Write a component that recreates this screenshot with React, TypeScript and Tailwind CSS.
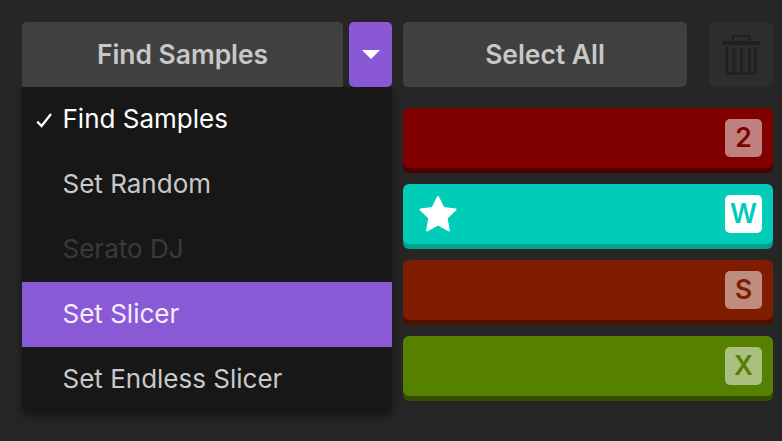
import React from "react";

function MenuItem({ label, kind }: { label: string; kind?: "checked" | "disabled" | "active" }) {
  const color =
    kind === "checked" ? "text-white" : kind === "disabled" ? "text-[#3a3a3a]" : kind === "active" ? "bg-[#8a5ad6] text-[#f4ecff]" : "text-[#c9c9c9]";
  return (
    <div className={`relative flex h-[65px] items-center pb-[2px] pl-[40.5px] text-[26px] ${color}`}>
      {kind === "checked" && (
        <svg className="absolute left-[14px] top-[26px]" width="16" height="15" viewBox="0 0 16 15" fill="none">
          <path d="M1.2 8.6 L5.6 13 L15 1" stroke="#ffffff" strokeWidth="2.3" />
        </svg>
      )}
      {label}
    </div>
  );
}

function Pad({ bg, edge, label, keyColor, keyBg, star }: { bg: string; edge: string; label: string; keyColor: string; keyBg: string; star?: boolean }) {
  return (
    <div className={`flex h-[60px] items-center justify-between rounded-[6px] pl-[16px] pr-[11px] ${bg} ${edge}`}>
      {star ? (
        <svg width="38" height="38" viewBox="0 0 38 38">
          <path d="M19 2 L24.4 13 L36.5 14.6 L27.6 23 L29.8 35.4 L19 29.4 L8.2 35.4 L10.4 23 L1.5 14.6 L13.6 13 Z" fill="#ffffff" stroke="#ffffff" strokeWidth="2" strokeLinejoin="round" />
        </svg>
      ) : (
        <span />
      )}
      <span className={`flex h-[38px] w-[37px] items-center justify-center rounded-[5px] text-[26.5px] font-semibold ${keyBg} ${keyColor}`}>{label}</span>
    </div>
  );
}

export default function App() {
  return (
    <div className="flex h-[441px] w-[782px] gap-[11px] overflow-hidden bg-[#262626] pl-[22px] pt-[22px] font-['Inter',sans-serif]">
      <div className="relative w-[370px]">
        <div className="flex h-[65px] gap-[6px]">
          <div className="flex w-[321px] items-center justify-center rounded-t-[5px] bg-[#404040] text-[26.4px] font-semibold text-[#c8c8c8]">
            Find Samples
          </div>
          <div className="flex w-[43px] items-center justify-center rounded-[5px] bg-[#8a58d6]">
            <svg width="18" height="9" viewBox="0 0 18 9">
              <path d="M0 0 H18 L9 9 Z" fill="#ffffff" />
            </svg>
          </div>
        </div>
        <div className="flex h-[325px] flex-col rounded-b-[6px] bg-[#171717] shadow-[0_4px_10px_rgba(0,0,0,0.45)]">
          <MenuItem label="Find Samples" kind="checked" />
          <MenuItem label="Set Random" />
          <MenuItem label="Serato DJ" kind="disabled" />
          <MenuItem label="Set Slicer" kind="active" />
          <MenuItem label="Set Endless Slicer" />
        </div>
      </div>
      <div className="flex w-[370px] flex-col">
        <div className="flex h-[65px] justify-between">
          <div className="flex w-[284px] items-center justify-center rounded-[5px] bg-[#404040] text-[26.4px] font-semibold text-[#c8c8c8]">
            Select All
          </div>
          <div className="flex w-[64px] items-center justify-center rounded-[5px] bg-[#2d2d2d]">
            <svg width="38" height="40" viewBox="0 0 38 40" fill="none" stroke="#202020" strokeWidth="2.5">
              <path d="M0 8 H38" strokeWidth="4" />
              <path d="M11 6 V2.5 Q11 1 12.5 1 H26 Q27.5 1 27.5 2.5 V6" strokeWidth="2" />
              <path d="M5 12 V36 Q5 38.5 7.5 38.5 H31 Q33.5 38.5 33.5 36 V12" />
              <path d="M12 13 V37 M19.5 13 V37 M27.5 13 V37" />
            </svg>
          </div>
        </div>
        <div className="mt-[21px] flex flex-col gap-[16px]">
          <Pad bg="bg-[#800000]" edge="shadow-[0_5px_0_#4d0000]" label="2" keyBg="bg-[#bf8080]" keyColor="text-[#800000]" />
          <Pad bg="bg-[#00ccb8]" edge="shadow-[0_5px_0_#00a08f]" label="W" keyBg="bg-white" keyColor="text-[#00ccb8]" star />
          <Pad bg="bg-[#801c00]" edge="shadow-[0_5px_0_#4d1100]" label="S" keyBg="bg-[#bf8d80]" keyColor="text-[#801c00]" />
          <Pad bg="bg-[#568000]" edge="shadow-[0_5px_0_#344d00]" label="X" keyBg="bg-[#abbf80]" keyColor="text-[#568000]" />
        </div>
      </div>
    </div>
  );
}
